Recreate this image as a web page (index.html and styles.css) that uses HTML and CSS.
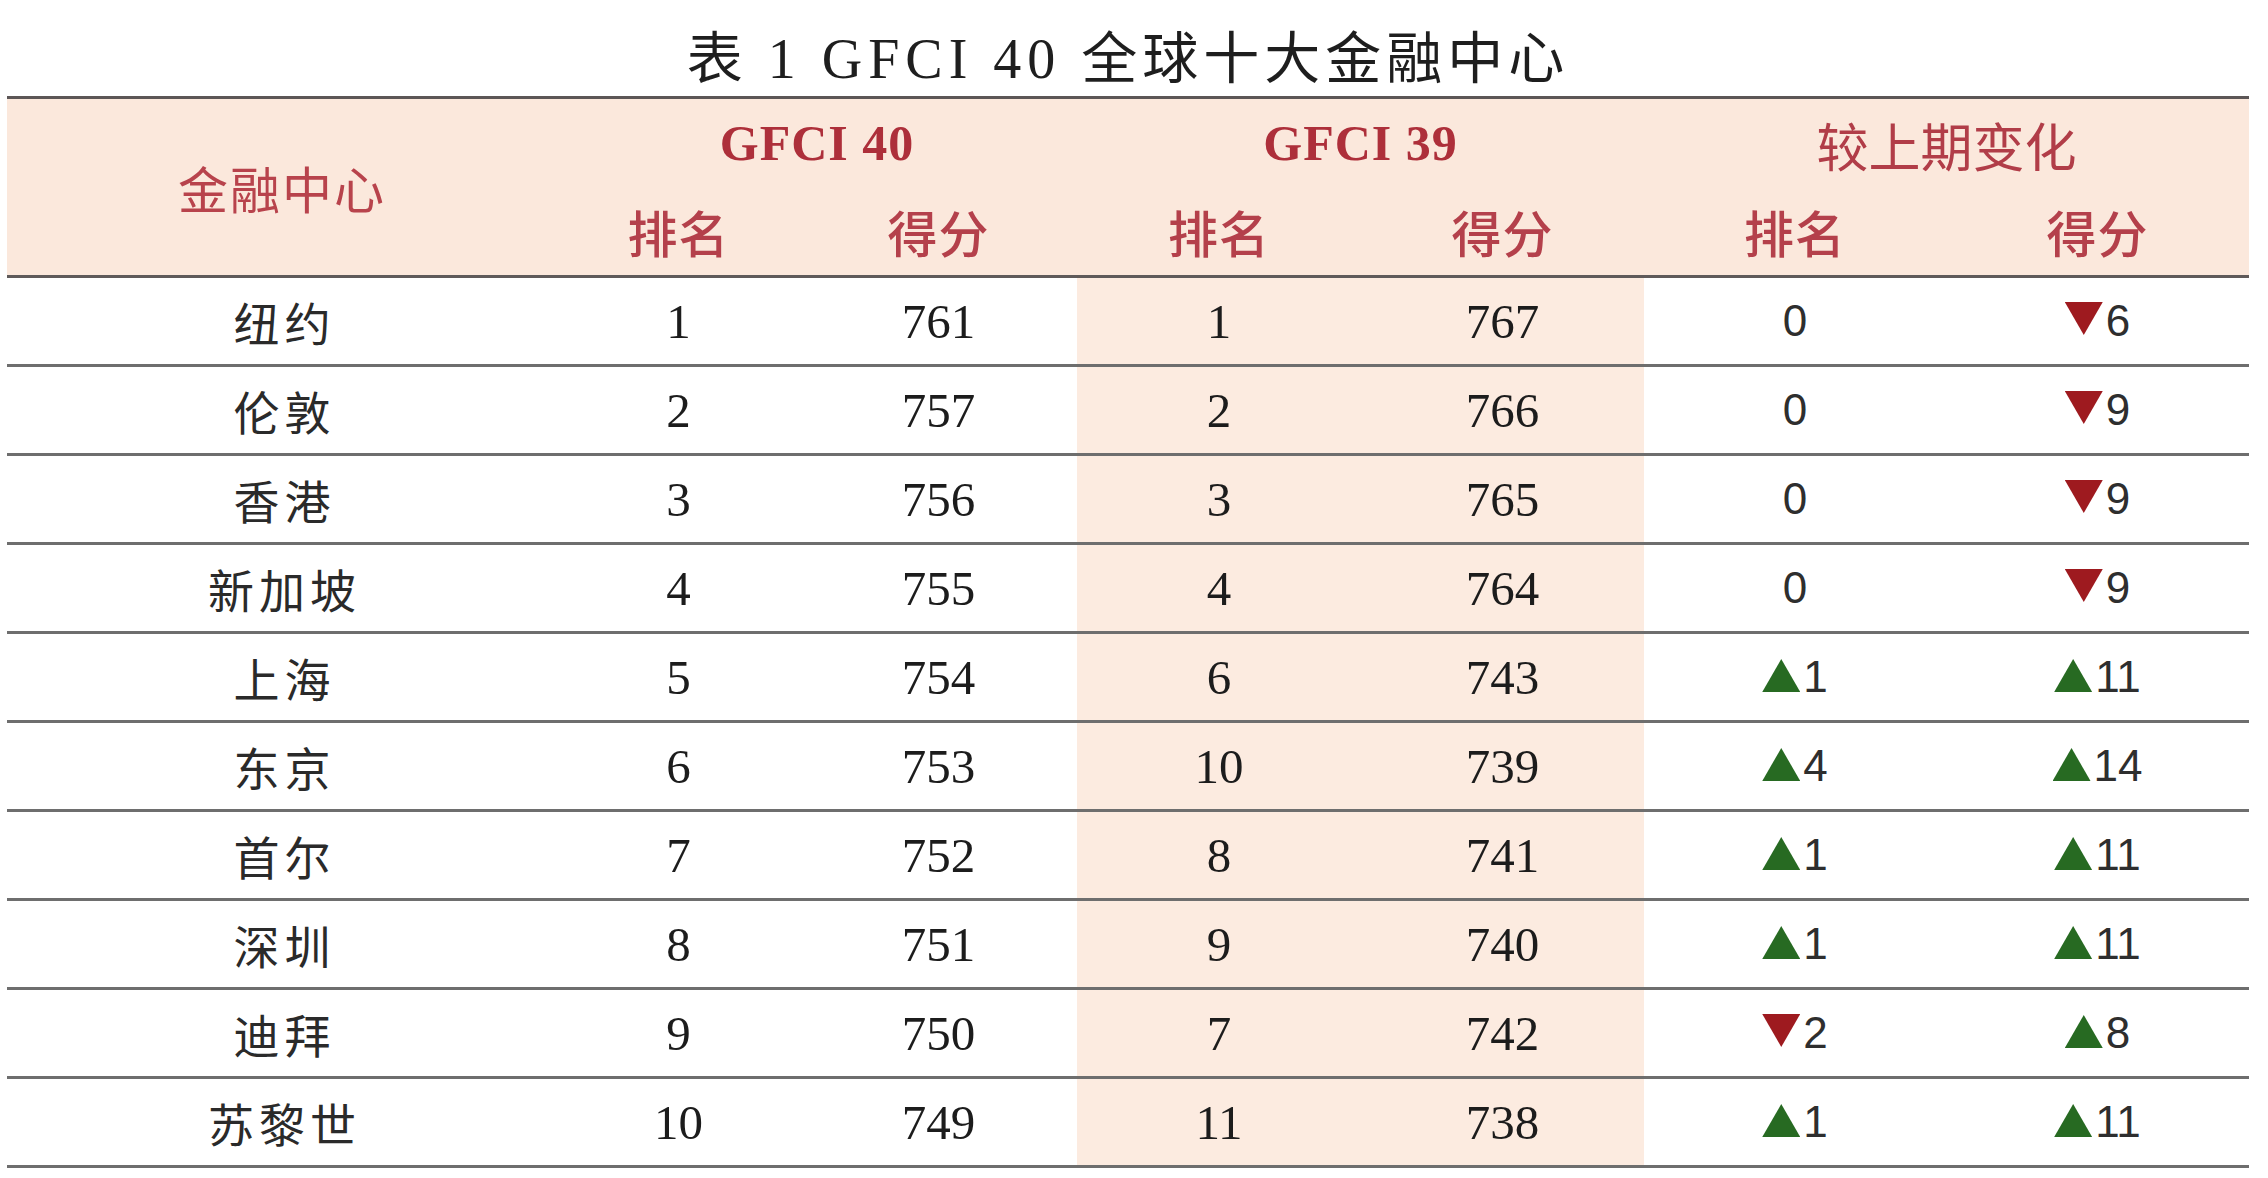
FILE: index.html
```html
<!DOCTYPE html>
<html lang="zh-CN">
<head>
<meta charset="utf-8">
<title>表 1 GFCI 40 全球十大金融中心</title>
<link rel="stylesheet" href="styles.css">
</head>
<body>
<div class="page">
  <h1 class="title"><span class="t-cjk">表</span><span class="t-lat"> 1 GFCI 40 </span><span class="t-cjk">全球十大金融中心</span></h1>
  <table class="gfci">
    <colgroup>
      <col class="c-city">
      <col class="c-r40">
      <col class="c-s40">
      <col class="c-r39">
      <col class="c-s39">
      <col class="c-rch">
      <col class="c-sch">
    </colgroup>
    <thead>
      <tr class="hrow1">
        <th rowspan="2" class="city-h">金融中心</th>
        <th colspan="2" class="grp">GFCI 40</th>
        <th colspan="2" class="grp">GFCI 39</th>
        <th colspan="2" class="grp-cjk">较上期变化</th>
      </tr>
      <tr class="hrow2">
        <th class="sub">排名</th><th class="sub">得分</th>
        <th class="sub">排名</th><th class="sub">得分</th>
        <th class="sub">排名</th><th class="sub">得分</th>
      </tr>
    </thead>
    <tbody>
      <tr><td class="city">纽约</td><td class="num">1</td><td class="num">761</td><td class="num prev">1</td><td class="num prev">767</td><td class="chg">0</td><td class="chg"><span class="tri down"></span>6</td></tr>
      <tr><td class="city">伦敦</td><td class="num">2</td><td class="num">757</td><td class="num prev">2</td><td class="num prev">766</td><td class="chg">0</td><td class="chg"><span class="tri down"></span>9</td></tr>
      <tr><td class="city">香港</td><td class="num">3</td><td class="num">756</td><td class="num prev">3</td><td class="num prev">765</td><td class="chg">0</td><td class="chg"><span class="tri down"></span>9</td></tr>
      <tr><td class="city">新加坡</td><td class="num">4</td><td class="num">755</td><td class="num prev">4</td><td class="num prev">764</td><td class="chg">0</td><td class="chg"><span class="tri down"></span>9</td></tr>
      <tr><td class="city">上海</td><td class="num">5</td><td class="num">754</td><td class="num prev">6</td><td class="num prev">743</td><td class="chg"><span class="tri up"></span>1</td><td class="chg"><span class="tri up"></span>11</td></tr>
      <tr><td class="city">东京</td><td class="num">6</td><td class="num">753</td><td class="num prev">10</td><td class="num prev">739</td><td class="chg"><span class="tri up"></span>4</td><td class="chg"><span class="tri up"></span>14</td></tr>
      <tr><td class="city">首尔</td><td class="num">7</td><td class="num">752</td><td class="num prev">8</td><td class="num prev">741</td><td class="chg"><span class="tri up"></span>1</td><td class="chg"><span class="tri up"></span>11</td></tr>
      <tr><td class="city">深圳</td><td class="num">8</td><td class="num">751</td><td class="num prev">9</td><td class="num prev">740</td><td class="chg"><span class="tri up"></span>1</td><td class="chg"><span class="tri up"></span>11</td></tr>
      <tr><td class="city">迪拜</td><td class="num">9</td><td class="num">750</td><td class="num prev">7</td><td class="num prev">742</td><td class="chg"><span class="tri down"></span>2</td><td class="chg"><span class="tri up"></span>8</td></tr>
      <tr><td class="city">苏黎世</td><td class="num">10</td><td class="num">749</td><td class="num prev">11</td><td class="num prev">738</td><td class="chg"><span class="tri up"></span>1</td><td class="chg"><span class="tri up"></span>11</td></tr>
    </tbody>
  </table>
</div>
</body>
</html>
```
FILE: styles.css
```css
html, body {
  margin: 0;
  padding: 0;
  background: #ffffff;
}

.page {
  width: 2242px;
  margin-left: 7px;
}

.title {
  margin: 0;
  padding-top: 19px;
  height: 77px;
  line-height: 70px;
  text-align: center;
  font-weight: 400;
  color: #1e1e1e;
  white-space: pre;
}

.t-cjk {
  font-family: "Noto Sans CJK SC", sans-serif;
  font-size: 56px;
  letter-spacing: 5px;
}

.t-lat {
  font-family: "Liberation Serif", "Noto Sans CJK SC", serif;
  font-size: 56px;
  letter-spacing: 6px;
}

.gfci {
  width: 2242px;
  table-layout: fixed;
  border-collapse: collapse;
  border-spacing: 0;
}

.c-city { width: 550px; }
.c-r40 { width: 243px; }
.c-s40 { width: 277px; }
.c-r39 { width: 284px; }
.c-s39 { width: 283px; }
.c-rch { width: 302px; }
.c-sch { width: 303px; }

.gfci thead {
  background: #fbe8dc;
}

.hrow1 {
  border-top: 3px solid #5c5656;
}

.hrow1 th {
  height: 83px;
  padding: 0;
  vertical-align: middle;
}

.hrow2 th {
  height: 89px;
  padding: 0;
  vertical-align: middle;
}

.hrow2 {
  border-bottom: 3px solid #5f5a5a;
}

.city-h {
  font-family: "Noto Sans CJK SC", sans-serif;
  font-size: 50px;
  font-weight: 400;
  color: #b8434c;
  letter-spacing: 2px;
}

.grp {
  font-family: "Liberation Serif", serif;
  font-size: 50px;
  font-weight: 700;
  color: #ad2f3a;
  letter-spacing: 1px;
}

.hrow1 .grp-cjk {
  font-family: "Noto Sans CJK SC", sans-serif;
  font-size: 52px;
  font-weight: 400;
  color: #b13d48;
  padding-top: 4px;
}

.sub {
  font-family: "Noto Sans CJK SC", sans-serif;
  font-size: 50px;
  font-weight: 500;
  color: #b4404b;
  letter-spacing: 1px;
}

.gfci tbody tr {
  border-bottom: 3px solid #6e6e6e;
}

.gfci td {
  height: 86px;
  padding: 0;
  text-align: center;
  vertical-align: middle;
}

.gfci td.city {
  font-family: "Noto Sans CJK SC", sans-serif;
  font-size: 46px;
  font-weight: 400;
  color: #2a2a2a;
  letter-spacing: 5px;
  padding-left: 5px;
}

.num {
  font-family: "Liberation Serif", serif;
  font-size: 49px;
  color: #1c1c1c;
}

.prev {
  background: #fcebe0;
}

.chg {
  font-family: "Liberation Sans", sans-serif;
  font-size: 44px;
  color: #2e2e2e;
}

.tri {
  display: inline-block;
  width: 38px;
  height: 33px;
  margin-right: 3px;
  vertical-align: baseline;
}

.tri.up {
  background: #276a22;
  clip-path: polygon(50% 0, 100% 100%, 0 100%);
}

.tri.down {
  background: #9e1a1f;
  clip-path: polygon(0 0, 100% 0, 50% 100%);
  position: relative;
  top: -1px;
}
```
